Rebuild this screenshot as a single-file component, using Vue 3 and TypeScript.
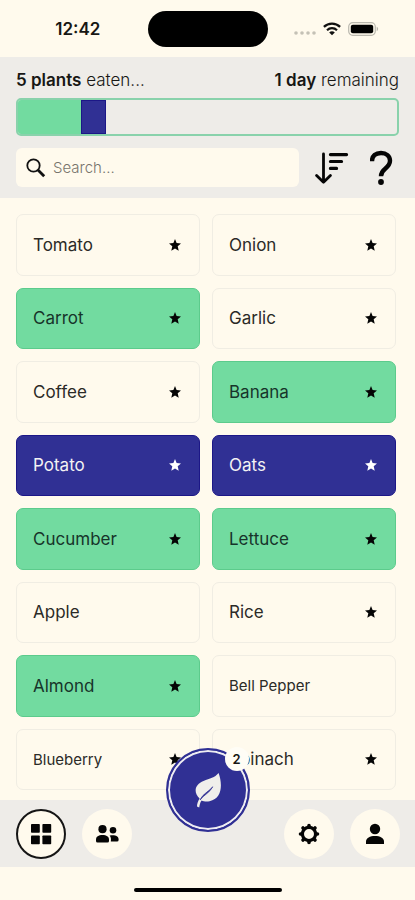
<script setup lang="ts">
import { computed, ref } from 'vue'

type State = 'none' | 'eaten' | 'picked'

interface Plant {
  name: string
  state: State
  starred: boolean
  compact?: boolean
}

const plants = ref<Plant[]>([
  { name: 'Tomato', state: 'none', starred: true },
  { name: 'Onion', state: 'none', starred: true },
  { name: 'Carrot', state: 'eaten', starred: true },
  { name: 'Garlic', state: 'none', starred: true },
  { name: 'Coffee', state: 'none', starred: true },
  { name: 'Banana', state: 'eaten', starred: true },
  { name: 'Potato', state: 'picked', starred: true },
  { name: 'Oats', state: 'picked', starred: true },
  { name: 'Cucumber', state: 'eaten', starred: true },
  { name: 'Lettuce', state: 'eaten', starred: true },
  { name: 'Apple', state: 'none', starred: false },
  { name: 'Rice', state: 'none', starred: true },
  { name: 'Almond', state: 'eaten', starred: true },
  { name: 'Bell Pepper', state: 'none', starred: false, compact: true },
  { name: 'Blueberry', state: 'none', starred: true, compact: true },
  { name: 'Spinach', state: 'none', starred: true },
])

const goal = 30
const query = ref('')
const eaten = computed(() => plants.value.filter((p) => p.state === 'eaten').length)
const picked = computed(() => plants.value.filter((p) => p.state === 'picked').length)
const eatenWidth = computed(() => `${(eaten.value / goal) * 100}%`)
const pickedWidth = computed(() => `${(picked.value / goal) * 100}%`)
const visible = computed(() =>
  plants.value.filter((p) => p.name.toLowerCase().includes(query.value.toLowerCase())),
)

function toggle(plant: Plant) {
  if (plant.state === 'eaten') return
  plant.state = plant.state === 'picked' ? 'none' : 'picked'
}
</script>

<template>
  <div class="app">
    <div class="status">
      <span class="time">12:42</span>
      <span class="island"></span>
      <span class="signals">
        <svg class="dots" width="22" height="14" viewBox="0 0 22 14">
          <g fill="#c4c1b6">
            <circle cx="2" cy="11" r="1.8" /><circle cx="8" cy="11" r="1.8" />
            <circle cx="14" cy="11" r="1.8" /><circle cx="20" cy="11" r="1.8" />
          </g>
        </svg>
        <svg width="18" height="14" viewBox="0 0 18 14">
          <g fill="none" stroke="#111" stroke-width="2.2">
            <path d="M0.9 4.9C5.4 0.4 12.6 0.4 17.1 4.9" />
            <path d="M4 8.2C6.8 5.5 11.2 5.5 14 8.2" />
          </g>
          <path d="M9 13.2L6.2 10.4C7.8 8.9 10.2 8.9 11.8 10.4Z" fill="#111" />
        </svg>
        <svg width="31" height="14" viewBox="0 0 31 14">
          <rect x="0.7" y="0.7" width="26.6" height="12.6" rx="4" fill="none" stroke="#bab8ae" stroke-width="1.2" />
          <rect x="2.8" y="2.8" width="22.4" height="8.4" rx="2" fill="#000" />
          <path d="M28.7 4.8C30.6 5.5 30.6 8.5 28.7 9.2Z" fill="#bab8ae" />
        </svg>
      </span>
    </div>

    <header class="header">
      <div class="summary">
        <span><b>{{ eaten }} plants</b> eaten...</span>
        <span><b>1 day</b> remaining</span>
      </div>
      <div class="progress" role="progressbar" :aria-valuenow="eaten" aria-valuemin="0" :aria-valuemax="goal">
        <div class="bar-eaten" :style="{ width: eatenWidth }"></div>
        <div class="bar-picked" :style="{ width: pickedWidth }"></div>
      </div>
      <div class="tools">
        <label class="search">
          <svg width="20" height="20" viewBox="0 0 20 20" fill="none" stroke="#111">
            <circle cx="7.5" cy="7.5" r="6.2" stroke-width="1.8" />
            <path d="M12 12L18.2 18.2" stroke-width="2.8" />
          </svg>
          <input v-model="query" type="text" placeholder="Search..." aria-label="Search plants" />
        </label>
        <button class="tool" type="button" aria-label="Sort">
          <svg width="34" height="34" viewBox="0 0 34 34" fill="none" stroke="#050505" stroke-linecap="round" stroke-linejoin="round">
            <path d="M8.5 3V31.2M1.6 24.4L8.5 31.2L15.4 24.4" stroke-width="2.8" />
            <path d="M15.4 3.6H31.6M15.4 10.5H26.6M15.4 17.4H21.6" stroke-width="3.1" />
          </svg>
        </button>
        <button class="tool" type="button" aria-label="Help">
          <svg width="24" height="36" viewBox="0 0 24 36" fill="none">
            <path d="M2 11.2C2 5.6 5.8 3 11 3C16.3 3 20 6.2 20 10.8C20 14.3 18.2 16.3 15.2 18.7C12.2 21.1 11 22.6 11 26.2" stroke="#050505" stroke-width="4.4" />
            <circle cx="11" cy="32" r="2.9" fill="#050505" />
          </svg>
        </button>
      </div>
    </header>

    <main class="plants">
      <button
        v-for="plant in visible"
        :key="plant.name"
        type="button"
        class="plant"
        :class="[plant.state, { compact: plant.compact }]"
        @click="toggle(plant)"
      >
        <span>{{ plant.name }}</span>
        <svg v-if="plant.starred" width="12" height="12" viewBox="0 0 12 12">
          <path d="M6 0L7.6 4L12 4.4L8.7 7.3L9.7 11.7L6 9.4L2.3 11.7L3.3 7.3L0 4.4L4.4 4Z" fill="currentColor" />
        </svg>
      </button>
    </main>

    <nav class="nav">
      <button class="round active" type="button" aria-label="Plants">
        <svg width="22" height="22" viewBox="0 0 22 22" fill="#050505">
          <rect x="1" y="1" width="8.8" height="8.8" rx="0.8" /><rect x="12.4" y="1" width="8.8" height="8.8" rx="0.8" />
          <rect x="1" y="12.4" width="8.8" height="8.8" rx="0.8" /><rect x="12.4" y="12.4" width="8.8" height="8.8" rx="0.8" />
        </svg>
      </button>
      <button class="round" type="button" aria-label="Friends">
        <svg width="24" height="20" viewBox="0 0 24 20" fill="#050505">
          <circle cx="7.5" cy="5.2" r="4.1" />
          <circle cx="18" cy="6.2" r="3.3" />
          <path d="M1 17V15.6C1 12.6 3.6 11 7.5 11S14 12.6 14 15.6V17Q14 18.6 12.4 18.6H2.6Q1 18.6 1 17Z" />
          <path d="M15 11.5C19.5 10.5 23.6 12 23.6 15.2V16Q23.6 17.6 22 17.6H15.8C16.2 15.2 16 13 14.6 11.6Z" />
        </svg>
      </button>
      <span class="spacer"></span>
      <button class="round" type="button" aria-label="Settings">
        <svg width="22" height="22" viewBox="0 0 22 22">
          <circle cx="11" cy="11" r="6.6" fill="none" stroke="#050505" stroke-width="3.2" />
          <g fill="none" stroke="#050505" stroke-width="3.6" stroke-linecap="round">
            <path d="M11 2.5V3.5M11 18.5V19.5M2.5 11H3.5M18.5 11H19.5M5 5L5.7 5.7M16.3 16.3L17 17M5 17L5.7 16.3M16.3 5.7L17 5" />
          </g>
        </svg>
      </button>
      <button class="round" type="button" aria-label="Profile">
        <svg width="20" height="22" viewBox="0 0 20 22" fill="#050505">
          <circle cx="10" cy="6" r="5.2" />
          <path d="M1 21V18.5C1 15 5 13 10 13S19 15 19 18.5V21Z" />
        </svg>
      </button>
      <button class="fab" type="button" aria-label="Log picked plants">
        <svg width="28" height="36" viewBox="0 0 28 36">
          <path d="M24.6 1C28.6 12 28.4 27 15.5 29.2C12.4 29.8 9.6 29.4 7.6 28.4C6 30.6 5.8 32.4 5.2 35.4L3 34.6C3 31.6 4 29 5.6 26.4C-1.4 19.5 1.5 12.2 9.5 9C16 6.4 20.6 5.8 24.6 1Z" fill="#f0efeb" />
          <path d="M6 28C9 21.8 13.5 20.6 18.8 14.8C15.5 20.8 9.8 23 6 28Z" fill="#303094" stroke="#303094" stroke-width="0.7" />
        </svg>
        <span class="badge">{{ picked }}</span>
      </button>
    </nav>

    <footer class="home"><span></span></footer>
  </div>
</template>

<style>
body {
  margin: 0;
  background: #fffaed;
}
</style>

<style scoped>
.app {
  display: flex;
  flex-direction: column;
  min-height: 100vh;
  background: #fffaed;
  color: #171714;
  font-family: Inter, "Liberation Sans", sans-serif;
}

button {
  padding: 0;
  border: 0;
  background: none;
  color: inherit;
  font: inherit;
  cursor: pointer;
}

svg {
  display: block;
  flex: none;
}

.status {
  display: grid;
  grid-template-columns: 1fr 120px 1fr;
  align-items: center;
  height: 57px;
}

.time {
  padding-left: 8px;
  text-align: center;
  font-size: 17px;
  font-weight: 600;
}

.island {
  height: 36px;
  border-radius: 18px;
  background: #000;
}

.signals {
  display: flex;
  justify-content: flex-end;
  align-items: center;
  gap: 7px;
  padding-right: 36px;
}

.header {
  display: flex;
  flex-direction: column;
  gap: 12px;
  padding: 12px 16px 11px;
  background: #eeece8;
}

.summary {
  display: flex;
  justify-content: space-between;
  margin-bottom: -5px;
  font-size: 17px;
  font-weight: 300;
  line-height: 22px;
}

.summary b {
  font-weight: 600;
}

.progress {
  display: flex;
  box-sizing: border-box;
  height: 38px;
  overflow: hidden;
  border: 2px solid #89d2ab;
  border-radius: 5px;
}

.bar-eaten {
  background: #72dba0;
}

.bar-picked {
  box-sizing: border-box;
  border: 1px solid #1c1787;
  background: #303094;
}

.tools {
  display: flex;
  align-items: center;
  gap: 16px;
}

.search {
  display: flex;
  flex: 1;
  align-items: center;
  gap: 7px;
  min-width: 0;
  height: 39px;
  padding: 0 10px;
  border-radius: 6px;
  background: #fffaed;
}

.search input {
  flex: 1;
  min-width: 0;
  padding: 0;
  border: 0;
  outline: 0;
  background: none;
  color: #171714;
  font: 300 15px Inter, sans-serif;
}

.search input::placeholder {
  color: #77746c;
  opacity: 1;
}

.tool {
  display: flex;
  justify-content: center;
  width: 34px;
}

.plants {
  display: grid;
  flex: 1;
  grid-template-columns: 1fr 1fr;
  grid-auto-rows: minmax(56px, 1fr);
  gap: 12px;
  padding: 16px 19px 10px 16px;
}

.plant {
  display: flex;
  justify-content: space-between;
  align-items: center;
  padding: 0 18px 0 16px;
  border: 1px solid #f0ede3;
  border-radius: 7px;
  color: #2b2a27;
  font-size: 17px;
  font-weight: 400;
  text-align: left;
}

.plant svg {
  color: #050505;
}

.compact {
  font-size: 15px;
}

.eaten {
  border-color: #5ccb8c;
  background: #72dba0;
  color: #17342a;
}

.picked {
  border-color: #1c1787;
  background: #303094;
  color: #f4f2f3;
}

.picked svg {
  color: #fff;
}

.nav {
  position: relative;
  display: flex;
  align-items: center;
  gap: 16px;
  height: 67px;
  padding: 0 15px 0 16px;
  background: #eeece8;
}

.spacer {
  flex: 1;
}

.round {
  display: flex;
  justify-content: center;
  align-items: center;
  width: 50px;
  height: 50px;
  border-radius: 50%;
  background: #fffaed;
}

.active {
  border: 2px solid #151515;
}

.fab {
  position: absolute;
  top: -52px;
  left: 50%;
  display: flex;
  justify-content: center;
  align-items: center;
  box-sizing: border-box;
  width: 84px;
  height: 84px;
  margin-left: -42px;
  border: 2px solid #303094;
  border-radius: 50%;
  background: #303094;
  box-shadow: inset 0 0 0 2px #eeedf2;
}

.badge {
  position: absolute;
  top: -3px;
  right: -1px;
  width: 24px;
  border-radius: 12px;
  background: #fffdf6;
  color: #171714;
  font-size: 13px;
  font-weight: 600;
  line-height: 24px;
  text-align: center;
}

.home {
  display: flex;
  justify-content: center;
  padding: 21px 0 8px;
}

.home span {
  width: 148px;
  height: 4px;
  border-radius: 2px;
  background: #000;
}
</style>
